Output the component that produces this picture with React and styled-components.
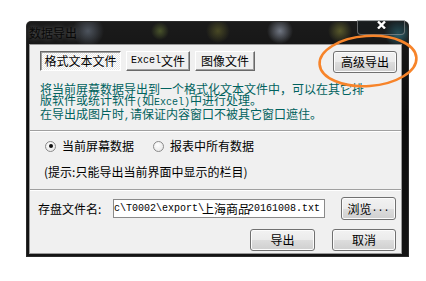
import * as React from "react"
import styled, { createGlobalStyle } from "styled-components"

const GlobalStyle = createGlobalStyle`
  body {
    margin: 0;
    background: #fff;
    font-family: "Noto Sans CJK SC", "Liberation Sans", sans-serif;
  }
`

const Page = styled.div`
  position: relative;
  width: 426px;
  height: 281px;
  overflow: hidden;
  padding: 21px 0 0 26px;
  box-sizing: border-box;
`

const Window = styled.div`
  width: 383px;
  height: 236px;
  display: flex;
  flex-direction: column;
  border-radius: 5px 5px 0 0;
  background:
    radial-gradient(circle at 62px 10px, rgba(120, 132, 150, 0.55) 0, rgba(120, 132, 150, 0) 16px),
    radial-gradient(circle at 134px 10px, rgba(120, 140, 60, 0.5) 0, rgba(120, 140, 60, 0) 9px),
    radial-gradient(circle at 192px 10px, rgba(130, 130, 50, 0.45) 0, rgba(130, 130, 50, 0) 12px),
    radial-gradient(circle at 254px 10px, rgba(170, 180, 200, 0.6) 0, rgba(170, 180, 200, 0) 13px),
    radial-gradient(circle at 314px 10px, rgba(150, 150, 60, 0.5) 0, rgba(150, 150, 60, 0) 12px),
    radial-gradient(circle at 372px 12px, rgba(60, 160, 180, 0.6) 0, rgba(60, 160, 180, 0) 14px),
    linear-gradient(#1b1b1b, #0c0c0c 40%, #141414);
  box-shadow: inset 0 0 0 1px #2a2a2a;
`

const TitleBar = styled.div`
  height: 23px;
  display: flex;
  align-items: center;
  padding-left: 3px;
`

const Title = styled.span`
  font-size: 12px;
  line-height: 12px;
  color: #080808;
  text-shadow: 0 0 5px rgba(200, 200, 200, 0.45);
`

const CloseButton = styled.div`
  align-self: flex-start;
  margin: -1px 4px 0 auto;
  width: 48px;
  height: 15px;
  box-sizing: border-box;
  border: 1px solid rgba(170, 170, 170, 0.55);
  border-top: none;
  border-radius: 0 0 4px 4px;
  background: rgba(20, 30, 35, 0.4);
  display: flex;
  justify-content: center;
  padding-top: 1px;
`

const Client = styled.div`
  margin: 0 7px 0 3px;
  height: 210px;
  box-sizing: border-box;
  border: 1px solid #9a9a9a;
  background: #f0f0f0;
  display: flex;
  flex-direction: column;
  color: #000;
  font-size: 12px;
`

const TopRow = styled.div`
  margin-top: 6px;
  height: 22px;
  display: flex;
  align-items: flex-start;
  padding: 0 4px 0 10px;
`

const Tabs = styled.div`
  display: flex;
  gap: 5px;
`

const Tab = styled.div`
  width: ${(p) => p.$w}px;
  height: 20px;
  box-sizing: border-box;
  display: flex;
  align-items: center;
  justify-content: center;
  font-size: 12px;
  line-height: 12px;
  border-style: solid;
  border-width: 1px;
  border-color: ${(p) => (p.$on ? "#696969 #fff #fff #696969" : "#fff #696969 #696969 #fff")};
  box-shadow: ${(p) =>
    p.$on ? "inset 1px 1px 0 #a0a0a0" : "inset -1px -1px 0 #a0a0a0"};
  background: ${(p) =>
    p.$on
      ? "repeating-conic-gradient(#ffffff 0 25%, #e6e6e6 0 50%) 0 0 / 2px 2px"
      : "#f0f0f0"};
`

const Button = styled.div`
  width: ${(p) => p.$w}px;
  height: ${(p) => p.$h || 22}px;
  box-sizing: border-box;
  display: flex;
  align-items: center;
  justify-content: center;
  font-size: 12px;
  line-height: 12px;
  border: 1px solid #707070;
  border-radius: 3px;
  box-shadow: inset 0 0 0 1px #fcfcfc;
  background: linear-gradient(#f2f2f2, #ebebeb 50%, #dddddd 51%, #cfcfcf);
  margin-left: ${(p) => (p.$push ? "auto" : "0")};
`

const Info = styled.div`
  margin-top: 10px;
  height: 33px;
  padding-left: 10px;
  font-size: 12px;
  line-height: 11px;
  color: #00625e;
  white-space: nowrap;
`

const Ascii = styled.span`
  font-family: "Liberation Mono", monospace;
  font-size: 10px;
`

const Separator = styled.div`
  margin-top: ${(p) => p.$top}px;
  border-top: 1px solid #a0a0a0;
  border-bottom: 1px solid #fff;
`

const RadioRow = styled.div`
  height: 28px;
  display: flex;
  align-items: center;
  padding-left: 15px;
`

const RadioItem = styled.label`
  display: flex;
  align-items: center;
  gap: 6px;
  margin-right: 19px;
  font-size: 12px;
  line-height: 12px;
`

const RadioCircle = styled.span`
  width: 11px;
  height: 11px;
  box-sizing: border-box;
  border-radius: 50%;
  border: 1px solid #8a8a8a;
  background: radial-gradient(circle at 40% 35%, #ffffff, #e2e2e2);
  display: flex;
  align-items: center;
  justify-content: center;

  &::after {
    content: "";
    width: 4px;
    height: 4px;
    border-radius: 50%;
    background: ${(p) => (p.$on ? "#111" : "transparent")};
  }
`

const Hint = styled.div`
  height: 24px;
  display: flex;
  align-items: center;
  padding-left: 14px;
  font-size: 12px;
  line-height: 12px;
`

const FileRow = styled.div`
  margin-top: 6px;
  height: 23px;
  display: flex;
  align-items: center;
  padding-left: 8px;
`

const FileLabel = styled.span`
  width: 75px;
  font-size: 12px;
  line-height: 12px;
`

const FileInput = styled.div`
  width: 212px;
  height: 19px;
  box-sizing: border-box;
  border: 1px solid #8a8a8a;
  background: #fff;
  margin-right: 16px;
  display: flex;
  align-items: center;
  overflow: hidden;
  white-space: nowrap;
  font-size: 12px;
  line-height: 12px;
  padding-left: 2px;
  text-indent: -2px;
`

const ButtonRow = styled.div`
  margin-top: 9px;
  height: 22px;
  display: flex;
  justify-content: flex-end;
  gap: 17px;
  padding-right: 5px;
`

const Annotation = styled.svg`
  position: absolute;
  left: 316px;
  top: 32px;
  overflow: visible;
`

export default function App() {
  return (
    <Page>
      <GlobalStyle />
      <Window>
        <TitleBar>
          <Title>数据导出</Title>
          <CloseButton>
            <svg width="9" height="8" viewBox="0 0 9 8">
              <path d="M1 0.5 L8 7.5 M8 0.5 L1 7.5" stroke="#fff" strokeWidth="2.4" />
            </svg>
          </CloseButton>
        </TitleBar>
        <Client>
          <TopRow>
            <Tabs>
              <Tab $w={81} $on>格式文本文件</Tab>
              <Tab $w={64}>
                <Ascii>Excel</Ascii>文件
              </Tab>
              <Tab $w={60}>图像文件</Tab>
            </Tabs>
            <Button $w={64} $push>高级导出</Button>
          </TopRow>
          <Info>
            将当前屏幕数据导出到一个格式化文本文件中，可以在其它排
            <br />
            版软件或统计软件<Ascii>(</Ascii>如<Ascii>Excel)</Ascii>中进行处理。
            <br />
            在导出成图片时<Ascii>,</Ascii>请保证内容窗口不被其它窗口遮住。
          </Info>
          <Separator $top={14} />
          <RadioRow>
            <RadioItem>
              <RadioCircle $on />
              当前屏幕数据
            </RadioItem>
            <RadioItem>
              <RadioCircle />
              报表中所有数据
            </RadioItem>
          </RadioRow>
          <Hint>(提示:只能导出当前界面中显示的栏目)</Hint>
          <Separator $top={5} />
          <FileRow>
            <FileLabel>存盘文件名:</FileLabel>
            <FileInput>
              <Ascii>c\T0002\export\</Ascii>上海商品<Ascii>20161008.txt</Ascii>
            </FileInput>
            <Button $w={55} $h={23}>
              浏览<Ascii>...</Ascii>
            </Button>
          </FileRow>
          <ButtonRow>
            <Button $w={65}>导出</Button>
            <Button $w={64}>取消</Button>
          </ButtonRow>
        </Client>
      </Window>
      <Annotation width="104" height="58" viewBox="0 0 104 58">
        <ellipse
          cx="52"
          cy="29"
          rx="48.5"
          ry="25"
          transform="rotate(-4 52 29)"
          fill="none"
          stroke="#f7842a"
          strokeWidth="2.6"
        />
      </Annotation>
    </Page>
  )
}
